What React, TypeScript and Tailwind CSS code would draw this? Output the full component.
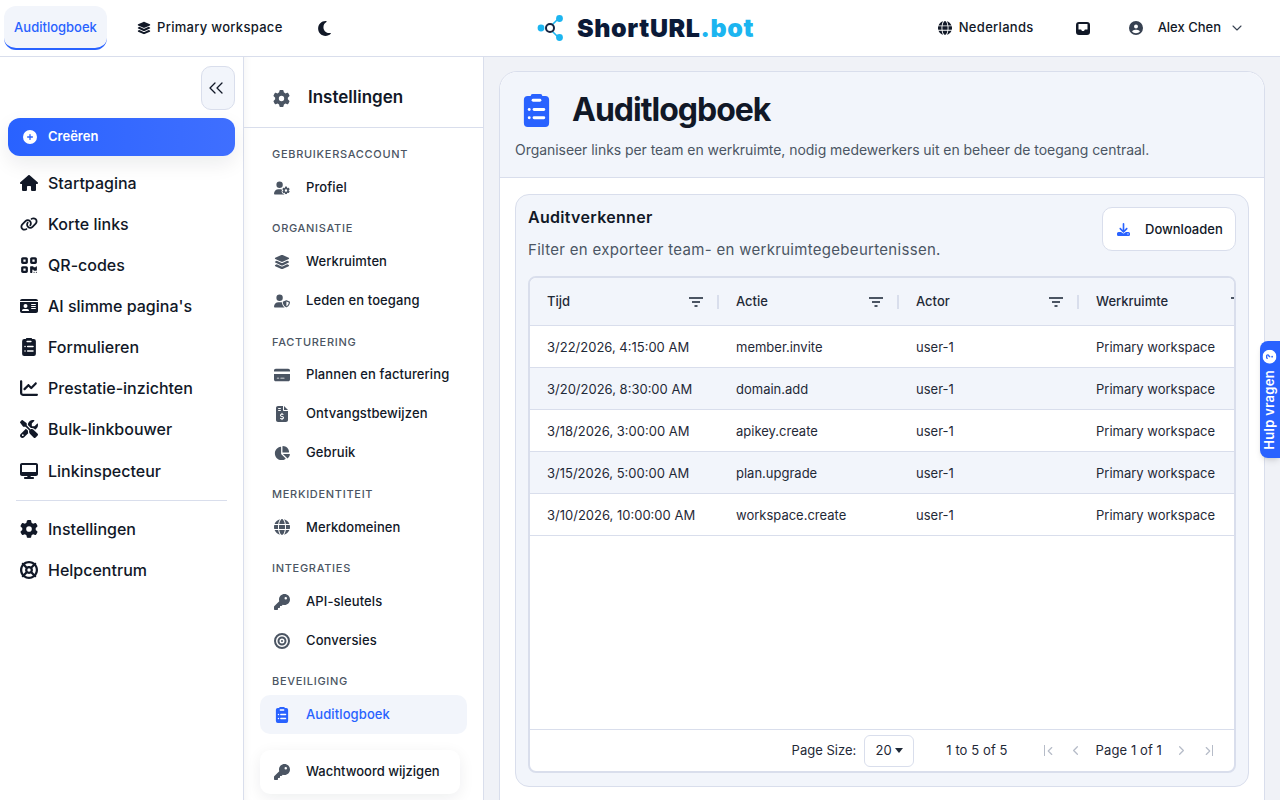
import type { ComponentType } from 'react';
import {
  FaBullseye,
  FaChartLine,
  FaChartPie,
  FaCirclePlus,
  FaCircleQuestion,
  FaCircleUser,
  FaCreditCard,
  FaDesktop,
  FaDownload,
  FaFileInvoiceDollar,
  FaGear,
  FaGlobe,
  FaHouse,
  FaIdCard,
  FaKey,
  FaLayerGroup,
  FaLifeRing,
  FaLink,
  FaMoon,
  FaQrcode,
  FaScrewdriverWrench,
  FaUserGear,
  FaUserShield,
} from 'react-icons/fa6';
import { ChevronDown, ChevronLeft, ChevronRight, ChevronsLeft } from 'lucide-react';

type Icon = ComponentType<{ className?: string }>;

const mainNav: { label: string; icon: Icon }[] = [
  { label: 'Startpagina', icon: FaHouse },
  { label: 'Korte links', icon: FaLink },
  { label: 'QR-codes', icon: FaQrcode },
  { label: "AI slimme pagina's", icon: FaIdCard },
  { label: 'Formulieren', icon: ClipboardIcon },
  { label: 'Prestatie-inzichten', icon: FaChartLine },
  { label: 'Bulk-linkbouwer', icon: FaScrewdriverWrench },
  { label: 'Linkinspecteur', icon: FaDesktop },
];

const settingsNav: { title: string; items: { label: string; icon: Icon; active?: boolean }[] }[] = [
  { title: 'Gebruikersaccount', items: [{ label: 'Profiel', icon: FaUserGear }] },
  {
    title: 'Organisatie',
    items: [
      { label: 'Werkruimten', icon: FaLayerGroup },
      { label: 'Leden en toegang', icon: FaUserShield },
    ],
  },
  {
    title: 'Facturering',
    items: [
      { label: 'Plannen en facturering', icon: FaCreditCard },
      { label: 'Ontvangstbewijzen', icon: FaFileInvoiceDollar },
      { label: 'Gebruik', icon: FaChartPie },
    ],
  },
  { title: 'Merkidentiteit', items: [{ label: 'Merkdomeinen', icon: FaGlobe }] },
  {
    title: 'Integraties',
    items: [
      { label: 'API-sleutels', icon: FaKey },
      { label: 'Conversies', icon: FaBullseye },
    ],
  },
  { title: 'Beveiliging', items: [{ label: 'Auditlogboek', icon: ClipboardIcon, active: true }] },
];

const rows = [
  ['3/22/2026, 4:15:00 AM', 'member.invite', 'user-1', 'Primary workspace'],
  ['3/20/2026, 8:30:00 AM', 'domain.add', 'user-1', 'Primary workspace'],
  ['3/18/2026, 3:00:00 AM', 'apikey.create', 'user-1', 'Primary workspace'],
  ['3/15/2026, 5:00:00 AM', 'plan.upgrade', 'user-1', 'Primary workspace'],
  ['3/10/2026, 10:00:00 AM', 'workspace.create', 'user-1', 'Primary workspace'],
];

// the audit clipboard: rounded body, nub on top, pill and two list lines knocked out
function ClipboardIcon({ className }: { className?: string }) {
  return (
    <svg viewBox="0 0 26 34" className={className} fill="currentColor">
      <path d="M9 0h8a2 2 0 0 1 2 2h3a4 4 0 0 1 4 4v24a4 4 0 0 1-4 4H4a4 4 0 0 1-4-4V6a4 4 0 0 1 4-4h3a2 2 0 0 1 2-2z" />
      <rect x="8" y="5" width="10" height="3" rx="1.5" fill="white" />
      <rect x="4" y="14.5" width="3" height="3" rx="1.5" fill="white" />
      <rect x="9" y="14.5" width="13" height="3" rx="1.5" fill="white" />
      <rect x="4" y="23" width="3" height="3" rx="1.5" fill="white" />
      <rect x="9" y="23" width="13" height="3" rx="1.5" fill="white" />
    </svg>
  );
}

function InboxIcon() {
  return (
    <svg viewBox="0 0 14 13" className="ml-[42px] h-[13px] w-[14px]">
      <path
        fill="currentColor"
        fillRule="evenodd"
        d="M3 0h8a3 3 0 0 1 3 3v7a3 3 0 0 1-3 3H3a3 3 0 0 1-3-3V3a3 3 0 0 1 3-3zM2.5 2v5.5h2.6l.9 1.5h2l.9-1.5h2.6V2z"
      />
    </svg>
  );
}

function FilterIcon() {
  return (
    <svg viewBox="0 0 16 12" className="h-3 w-4 shrink-0 text-[#4b5563]" fill="currentColor">
      <rect x="1" y="1" width="14" height="2" />
      <rect x="4" y="5" width="8" height="2" />
      <rect x="6.5" y="9" width="3" height="2" />
    </svg>
  );
}

function Logo() {
  return (
    <div className="flex items-center gap-[12px]">
      <svg viewBox="0 0 28 28" className="h-7 w-7">
        <path d="M14 12 L22 4 M14 16 L22 24" stroke="#1cb5f0" strokeWidth="1.6" />
        <circle cx="22.5" cy="4.5" r="3.4" fill="#1cb5f0" />
        <circle cx="22.5" cy="23.5" r="3.4" fill="#1cb5f0" />
        <circle cx="4" cy="14" r="3.4" fill="#1cb5f0" />
        <circle cx="13" cy="14" r="4" fill="white" stroke="#16233f" strokeWidth="2" />
      </svg>
      <span className="text-[25px] leading-none font-black tracking-[0.6px] text-[#0b1a38]">
        ShortURL<span className="text-[#1cb5f0]">.bot</span>
      </span>
    </div>
  );
}

function Header() {
  return (
    <header className="relative z-10 flex h-[57px] shrink-0 items-center border-b border-[#d9deec] bg-white pl-1 pr-[35px]">
      <div className="flex w-[533px] shrink-0 items-center">
        <div className="flex h-[44px] w-[103px] items-center justify-center rounded-[12px] border-b-2 border-[#2962ff] bg-[#f2f5fb] pt-[2px] text-[13px] font-medium text-[#2962ff]">
          Auditlogboek
        </div>
        <div className="ml-[30px] flex items-center gap-[6px] text-[13px] font-medium tracking-[0.3px] text-[#111827]">
          <FaLayerGroup className="h-[14px] w-[14px]" />
          Primary workspace
        </div>
        <FaMoon className="ml-[33px] h-[17px] w-[17px] text-[#111827]" />
      </div>
      <Logo />
      <div className="ml-auto flex items-center text-[13px] font-medium text-[#111827]">
        <FaGlobe className="h-[14px] w-[14px]" />
        <span className="ml-[7px] tracking-[0.3px]">Nederlands</span>
        <InboxIcon />
        <FaCircleUser className="ml-[39px] h-[14px] w-[14px] text-[#374151]" />
        <span className="ml-[15px]">Alex Chen</span>
        <ChevronDown className="ml-[8px] h-4 w-4 text-[#374151]" strokeWidth={1.6} />
      </div>
    </header>
  );
}

function MainSidebar() {
  return (
    <aside className="flex w-[244px] shrink-0 flex-col border-r border-[#d9deec] bg-white pl-2 pr-2">
      <div className="mt-[9px] flex justify-end">
        <button className="flex h-[44px] w-[34px] items-center justify-center rounded-[10px] border border-[#d9deec] bg-[#f2f5fb] pr-[5px] text-[#111827]">
          <ChevronsLeft className="h-6 w-6 shrink-0" strokeWidth={1.3} />
        </button>
      </div>
      <button className="mt-2 flex h-[38px] w-[227px] items-center gap-[11px] rounded-[12px] bg-gradient-to-r from-[#2962ff] to-[#3f6fff] pl-[15px] text-[13px] font-semibold text-white shadow-[0_8px_20px_rgba(17,24,39,0.08)]">
        <FaCirclePlus className="h-[14px] w-[14px]" />
        Creëren
      </button>
      <nav className="mt-[6px] flex flex-col">
        {mainNav.map((item) => (
          <a key={item.label} className="flex h-[41.15px] items-center gap-[10px] pl-3 text-[16px] font-medium text-[#111827]">
            <item.icon className="h-[18px] w-[18px] shrink-0" />
            {item.label}
          </a>
        ))}
      </nav>
      <div className="mx-2 mt-[9px] mb-[7px] h-px bg-[#d9deec]" />
      <nav className="flex flex-col">
        <a className="flex h-[41px] items-center gap-[10px] pl-3 text-[16px] font-medium text-[#111827]">
          <FaGear className="h-[18px] w-[18px] shrink-0" />
          Instellingen
        </a>
        <a className="flex h-[41px] items-center gap-[10px] pl-3 text-[16px] font-medium text-[#111827]">
          <FaLifeRing className="h-[18px] w-[18px] shrink-0" />
          Helpcentrum
        </a>
      </nav>
    </aside>
  );
}

function SettingsSidebar() {
  return (
    <aside className="flex w-[240px] shrink-0 flex-col border-r border-[#d9deec] bg-white shadow-[inset_8px_0_10px_-8px_rgba(17,24,39,0.06)]">
      <div className="flex h-[71px] shrink-0 items-center gap-[18px] border-b border-[#d9deec] pt-[12px] pl-[29px] text-[17px] font-semibold text-[#111827]">
        <FaGear className="h-[17px] w-[17px] text-[#4b5563]" />
        Instellingen
      </div>
      <div className="flex flex-col px-4 pt-[19px]">
        {settingsNav.map((group) => (
          <div key={group.title} className="mb-[14.25px]">
            <div className="pl-3 text-[11px] leading-[14px] font-medium tracking-[0.7px] text-[#4b5563] uppercase">
              {group.title}
            </div>
            <div className="mt-[7px] flex flex-col">
              {group.items.map((item) => (
                <a
                  key={item.label}
                  className={`flex h-[39px] items-center gap-[16px] rounded-[10px] pl-[14px] text-[13px] font-medium tracking-[0.1px] ${
                    item.active ? 'bg-[#f2f5fb] text-[#2962ff]' : 'text-[#111827]'
                  }`}
                >
                  <item.icon className={`h-[16px] w-[16px] shrink-0 ${item.active ? 'text-[#2962ff]' : 'text-[#4b5563]'}`} />
                  {item.label}
                </a>
              ))}
            </div>
          </div>
        ))}
        <a className="mt-[1px] flex h-[44px] w-[200px] items-center gap-[16px] rounded-[10px] bg-white pl-[14px] text-[13px] font-medium text-[#111827] shadow-[0_4px_16px_rgba(17,24,39,0.07)]">
          <FaKey className="h-[16px] w-[16px] shrink-0 text-[#4b5563]" />
          Wachtwoord wijzigen
        </a>
      </div>
    </aside>
  );
}

function AuditTable() {
  const columns = ['Tijd', 'Actie', 'Actor', 'Werkruimte'];
  return (
    <div className="mt-[16px] flex h-[497px] flex-col overflow-hidden rounded-[8px] border-2 border-[#d9deec] bg-white">
      <div className="grid h-[48px] shrink-0 grid-cols-[189px_180px_180px_180px] border-b border-[#d9deec] bg-[#f2f5fb] text-[13px] font-medium text-[#1f2937]">
        {columns.map((col, i) => (
          <div key={col} className="flex items-center justify-between pl-[17px]">
            {col}
            <div className="flex items-center gap-[13px]">
              <FilterIcon />
              {i < 3 ? <div className="h-[14px] w-[2px] bg-[#d9deec]" /> : null}
              {i === 3 ? <div className="w-0" /> : null}
            </div>
          </div>
        ))}
      </div>
      <div className="flex-1">
        {rows.map((row, i) => (
          <div
            key={row[0]}
            className={`grid h-[42px] grid-cols-[189px_180px_180px_180px] items-center border-b border-[#d9deec] pt-[2px] text-[13px] text-[#1f2937] ${
              i % 2 === 1 ? 'bg-[#f2f5fb]' : 'bg-white'
            }`}
          >
            {row.map((cell) => (
              <div key={cell} className="pl-[17px] whitespace-nowrap">
                {cell}
              </div>
            ))}
          </div>
        ))}
      </div>
      <div className="flex h-[42px] shrink-0 items-center justify-end border-t border-[#d9deec] pr-[17px] text-[13px] tracking-[0.1px] text-[#1f2937]">
        <span className="tracking-normal">Page Size:</span>
        <div className="ml-2 flex h-[32px] w-[50px] items-center justify-center gap-[3px] rounded-[6px] border border-[#d9deec]">
          20
          <span className="mt-[-1px] h-0 w-0 border-x-[4px] border-t-[5px] border-x-transparent border-t-[#1f2937]" />
        </div>
        <span className="ml-[32px]">1 to 5 of 5</span>
        <div className="ml-[34px] flex h-4 w-4 items-center text-[#b6bcc8]">
          <div className="ml-[2px] h-[11px] w-px bg-[#b6bcc8]" />
          <ChevronLeft className="-ml-[2px] h-[14px] w-[14px]" />
        </div>
        <ChevronLeft className="ml-[10px] h-[15px] w-[15px] text-[#b6bcc8]" />
        <span className="ml-[13px]">Page 1 of 1</span>
        <ChevronRight className="ml-[12px] h-[15px] w-[15px] text-[#b6bcc8]" />
        <div className="ml-[12px] flex h-4 w-4 items-center text-[#b6bcc8]">
          <ChevronRight className="h-[14px] w-[14px]" />
          <div className="-ml-[3px] h-[11px] w-px bg-[#b6bcc8]" />
        </div>
      </div>
    </div>
  );
}

export default function App() {
  return (
    <div className="relative flex h-screen w-full flex-col overflow-hidden bg-[#f0f2f7] font-['Inter',sans-serif]">
      <Header />
      <div className="flex min-h-0 flex-1">
        <MainSidebar />
        <SettingsSidebar />
        <main className="min-w-0 flex-1 pt-[14px] pr-[15px] pl-[15px]">
          <div className="h-[760px] rounded-[18px] border border-[#d9deec] bg-white">
            <div className="h-[106px] rounded-t-[18px] border-b border-[#d9deec] bg-[#f2f5fb] pl-[15px]">
              <div className="flex items-center gap-[22px] pt-[19px] pl-[8px]">
                <ClipboardIcon className="h-[33px] w-[27px] text-[#2962ff]" />
                <h1 className="text-[32px] leading-[38px] font-bold tracking-[-1px] text-[#111827]">Auditlogboek</h1>
              </div>
              <p className="mt-[11px] text-[14px] leading-5 tracking-[-0.05px] text-[#4b5563]">
                Organiseer links per team en werkruimte, nodig medewerkers uit en beheer de toegang centraal.
              </p>
            </div>
            <div className="px-[15px] pt-[16px]">
              <section className="h-[593px] rounded-[14px] border border-[#d9deec] bg-[#f2f5fb] px-[12px] pt-[12px]">
                <div className="flex items-start justify-between">
                  <div>
                    <h2 className="text-[16px] leading-5 font-semibold tracking-[0.3px] text-[#111827]">Auditverkenner</h2>
                    <p className="mt-[13px] text-[15px] leading-5 tracking-[0.3px] text-[#4b5563]">
                      Filter en exporteer team- en werkruimtegebeurtenissen.
                    </p>
                  </div>
                  <button className="flex h-[44px] w-[134px] items-center gap-[15px] rounded-[10px] border border-[#d9deec] bg-white pt-px pl-[14px] text-[13px] font-medium text-[#111827]">
                    <FaDownload className="h-[13px] w-[13px] text-[#2962ff]" />
                    Downloaden
                  </button>
                </div>
                <AuditTable />
              </section>
            </div>
          </div>
        </main>
      </div>
      <button className="absolute top-[341px] right-0 flex h-[117px] w-[20px] items-center justify-center rounded-l-[8px] bg-[#2962ff] shadow-md">
        <span className="flex rotate-180 items-center gap-[6px] text-[13px] font-semibold tracking-[0.3px] whitespace-nowrap text-white [writing-mode:vertical-rl]">
          Hulp vragen
          <FaCircleQuestion className="h-[14px] w-[14px] rotate-90" />
        </span>
      </button>
    </div>
  );
}
